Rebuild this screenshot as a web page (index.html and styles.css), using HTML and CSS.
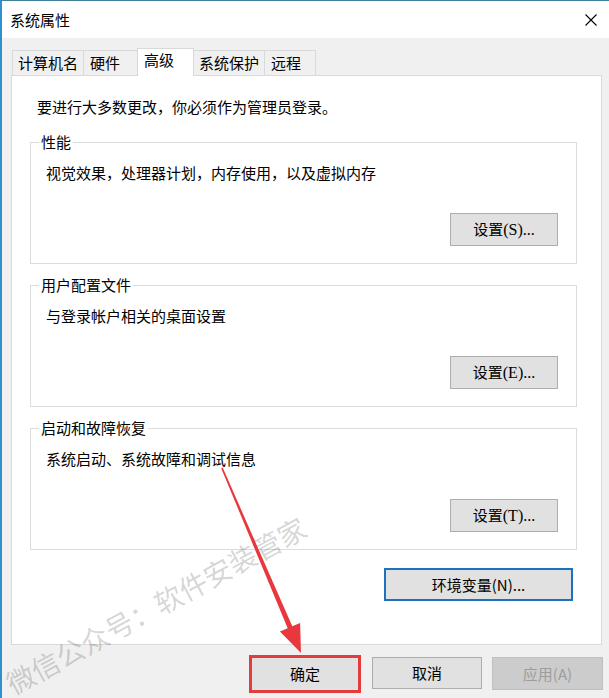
FILE: index.html
```html
<!DOCTYPE html>
<html>
<head>
  <meta charset="UTF-8">
  <title>系统属性</title>
  <link rel="stylesheet" href="styles.css">
</head>
<body>
  <div class="window">
    <div class="titlebar">
      <span class="title">系统属性</span>
      <svg class="close" width="12" height="12" viewBox="0 0 12 12">
        <path d="M0.5 0.5 L11.5 11.5 M11.5 0.5 L0.5 11.5" stroke="#000" stroke-width="1.1" fill="none"/>
      </svg>
    </div>

    <div class="dialog">
      <div class="tabs">
        <div class="tab tab-name">计算机名</div>
        <div class="tab tab-hw">硬件</div>
        <div class="tab tab-adv active">高级</div>
        <div class="tab tab-prot">系统保护</div>
        <div class="tab tab-remote">远程</div>
      </div>

      <div class="panel">
        <p class="note">要进行大多数更改，你必须作为管理员登录。</p>

        <fieldset class="group">
          <legend>性能</legend>
          <p class="group-text">视觉效果，处理器计划，内存使用，以及虚拟内存</p>
          <div class="group-actions">
            <button class="btn">设置<span class="lat">(S)...</span></button>
          </div>
        </fieldset>

        <fieldset class="group">
          <legend>用户配置文件</legend>
          <p class="group-text">与登录帐户相关的桌面设置</p>
          <div class="group-actions">
            <button class="btn">设置<span class="lat">(E)...</span></button>
          </div>
        </fieldset>

        <fieldset class="group">
          <legend>启动和故障恢复</legend>
          <p class="group-text">系统启动、系统故障和调试信息</p>
          <div class="group-actions">
            <button class="btn">设置<span class="lat">(T)...</span></button>
          </div>
        </fieldset>

        <div class="env-row">
          <button class="btn btn-default">环境变量(N)...</button>
        </div>
      </div>

      <div class="footer">
        <button class="btn btn-ok">确定</button>
        <button class="btn btn-cancel">取消</button>
        <button class="btn btn-apply" disabled>应用(A)</button>
      </div>
    </div>

    <!-- watermark and annotation arrow, drawn over the dialog -->
    <div class="watermark">微信公众号：软件安装管家</div>
    <svg class="arrow" width="609" height="698" viewBox="0 0 609 698">
      <polygon points="221.3,468.4 222.7,467.6 292.3,626.3 300.1,623 301,653 279.9,631.6 287.7,628.3" fill="#e8383d"/>
    </svg>
  </div>
</body>
</html>
```

FILE: styles.css
```css
* {
  margin: 0;
  padding: 0;
  box-sizing: border-box;
}

body {
  font-family: "Noto Sans CJK SC", "Noto Sans", sans-serif;
  font-size: 15px;
  color: #000;
  background: #f0f0f0;
  width: 609px;
  height: 698px;
  overflow: hidden;
}

.window {
  position: relative;
  width: 609px;
  height: 698px;
  border-top: 1px solid #3f7f9c;
  border-left: 2px solid #2f8fcf;
  background: #f0f0f0;
  display: flex;
  flex-direction: column;
}

.titlebar {
  height: 37px;
  background: #fff;
  display: flex;
  justify-content: space-between;
  align-items: center;
  padding: 0 12px 0 8px;
  line-height: 20px;
}

.dialog {
  flex: 1;
  padding: 10px 0 0 9px;
  display: flex;
  flex-direction: column;
}

/* tabs */
.tabs {
  display: flex;
  height: 28px;
  margin-left: 1px;
  margin-bottom: -1px;
  position: relative;
  z-index: 1;
}

.tab {
  height: 25px;
  margin-top: 2px;
  margin-right: -1px;
  border: 1px solid #d9d9d9;
  border-bottom: none;
  background: #f0f0f0;
  padding-left: 5px;
  line-height: 23px;
  white-space: nowrap;
}

.tab.active {
  height: 28px;
  margin-top: 0;
  background: #fff;
  line-height: 22px;
  padding-left: 6px;
}

.tab-name { width: 72px; }
.tab-hw { width: 55px; padding-left: 6px; }
.tab-adv { width: 57px; }
.tab-prot { width: 72px; }
.tab-remote { width: 52px; padding-left: 6px; }

/* tab page */
.panel {
  width: 591px;
  height: 570px;
  background: #fff;
  border: 1px solid #d9d9d9;
}

.note {
  line-height: 20px;
  margin: 21px 0 0 25px;
}

.group {
  margin: 15px 0 0 18px;
  width: 547px;
  height: 132px;
  border: 1px solid #dcdcdc;
  padding: 0;
}

.group + .group {
  margin-top: 11px;
}

.group legend {
  margin-left: 8px;
  padding: 0 2px;
  line-height: 20px;
}

.group-text {
  line-height: 20px;
  margin: 11px 0 0 15px;
}

.group-actions {
  display: flex;
  justify-content: flex-end;
  margin: 30px 18px 0 0;
}

/* buttons */
.btn {
  font-family: inherit;
  font-size: 15px;
  color: #000;
  background: #e1e1e1;
  border: 1px solid #adadad;
  width: 108px;
  height: 33px;
  line-height: 20px;
}

.btn .lat {
  font-family: "Liberation Serif", serif;
  font-size: 16px;
}

.env-row {
  display: flex;
  justify-content: flex-end;
  margin: 18px 28px 0 0;
}

.btn-default {
  width: 189px;
  border: 2px solid #1d72bf;
}

.footer {
  display: flex;
  justify-content: flex-end;
  align-items: flex-start;
  gap: 11px;
  padding: 10px 6px 0 0;
}

.btn-ok {
  width: 112px;
  height: 38px;
  border: 3px solid #e23c3e;
}

.btn-cancel {
  width: 110px;
  height: 32px;
  margin-top: 2px;
  margin-right: -1px;
}

.btn-apply {
  width: 111px;
  height: 33px;
  margin-top: 2px;
  background: #cccccc;
  border-color: #bfbfbf;
  color: #9d9d9d;
}

/* overlays */
.watermark {
  position: absolute;
  left: 6px;
  top: 673px;
  font-size: 28px;
  line-height: 22px;
  white-space: nowrap;
  color: rgba(0, 0, 0, 0.18);
  transform-origin: 0 50%;
  transform: rotate(-28.5deg);
  pointer-events: none;
}

.arrow {
  position: absolute;
  left: -2px;
  top: -1px;
  pointer-events: none;
}
```
